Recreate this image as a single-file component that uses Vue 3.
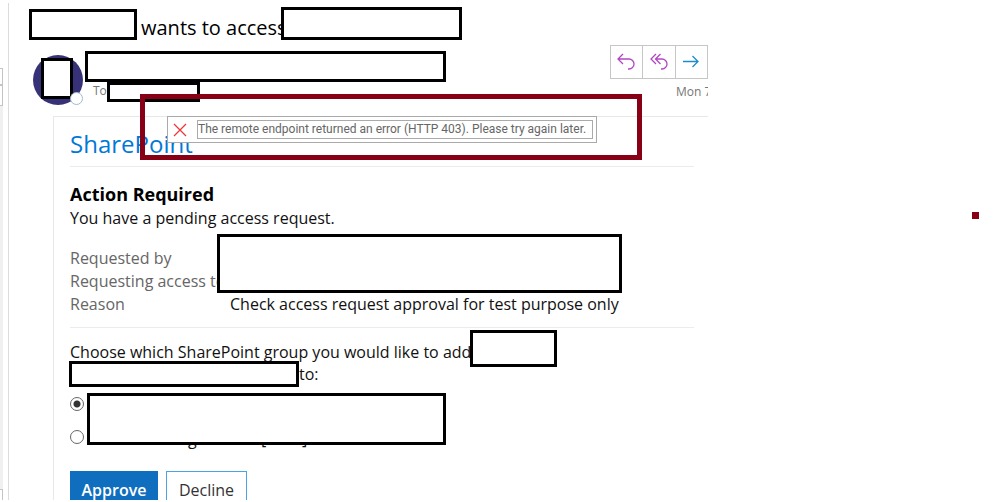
<script setup>
import { ref } from 'vue'

const group = ref('first')
</script>

<template>
  <div class="window">
    <div class="rail" aria-hidden="true">
      <div class="rail-top"></div>
      <div class="rail-button"></div>
      <div class="rail-track"></div>
      <div class="rail-end"></div>
    </div>

    <main class="pane">
      <h1 class="subject">
        <span class="redacted subject-from"></span>
        <span class="subject-text">wants to access</span>
        <span class="redacted subject-site"></span>
      </h1>

      <header class="sender">
        <div class="avatar">
          <span class="redacted avatar-cover"></span>
          <span class="presence"></span>
        </div>
        <div class="sender-lines">
          <div class="redacted sender-name"></div>
          <div class="to-line">
            <span>To</span>
            <span class="redacted to-name"></span>
          </div>
        </div>
        <div class="sender-side">
          <div class="actions">
            <button type="button" aria-label="Reply">
              <svg width="18" height="18" viewBox="0 0 18 18" class="reply">
                <path d="M5 1 0 6 5 11M0 6H11A4.500 4.500 0 0 1 11 16H10" />
              </svg>
            </button>
            <button type="button" aria-label="Reply all">
              <svg width="18" height="18" viewBox="0 0 18 18" class="reply">
                <path d="M6 1 1 6 6 11M10.500 1 5.500 6 10.500 11M5.500 6H12A4.500 4.500 0 0 1 12 16H11" />
              </svg>
            </button>
            <button type="button" aria-label="Forward">
              <svg width="18" height="18" viewBox="0 0 18 18" class="forward">
                <path d="M1 8.500H16M10.500 3 16 8.500 10.500 14" />
              </svg>
            </button>
          </div>
          <div class="date">Mon 7</div>
        </div>
      </header>

      <section class="card">
        <div class="brand">SharePoint</div>
        <div class="block">
          <h2>Action Required</h2>
          <p class="lead">You have a pending access request.</p>
          <dl class="facts">
            <dt>Requested by</dt><dd></dd>
            <dt>Requesting access to</dt><dd></dd>
            <dt>Reason</dt><dd>Check access request approval for test purpose only</dd>
          </dl>
          <span class="redacted facts-cover"></span>
        </div>
        <form class="block choose" @submit.prevent>
          <p class="question">
            Choose which SharePoint group you would like to add
            <span class="redacted person-cover"></span>
          </p>
          <p class="question second">to:</p>
          <span class="redacted line-cover"></span>
          <div class="options">
            <label><input v-model="group" type="radio" name="group" value="first" /></label>
            <label>
              <input v-model="group" type="radio" name="group" value="second" />
              <span class="option-text"><span>g</span><span>[</span><span>]</span></span>
            </label>
            <span class="redacted options-cover"></span>
          </div>
          <div class="buttons">
            <button type="button" class="approve">Approve</button>
            <button type="button" class="decline">Decline</button>
          </div>
        </form>
      </section>

      <div class="highlight">
        <div class="toast" role="alert">
          <svg width="14" height="14" viewBox="0 0 14 14" class="cross">
            <path d="M1 1 13 13M13 1 1 13" />
          </svg>
          <span class="toast-text">The remote endpoint returned an error (HTTP 403). Please try again later.</span>
        </div>
      </div>
    </main>

    <aside class="margin"><span class="mark"></span></aside>
  </div>
</template>

<style>
body {
  background: #fff;
}
</style>

<style scoped>
* {
  box-sizing: border-box;
}
.window {
  display: grid;
  grid-template-columns: 9px 699fr 291fr;
  height: calc(100vh - 2px);
  overflow: hidden;
  background: #fff;
  color: #111;
  font-family: "Open Sans", "Noto Sans", sans-serif;
  font-size: 16px;
}
h1, h2, p, dl, dd {
  margin: 0;
}
button {
  font: inherit;
  padding: 0;
}
.redacted {
  display: block;
  border: 3px solid #000;
  background: #fff;
}
.rail {
  display: flex;
  flex-direction: column;
  margin-top: 3px;
  padding-right: 5px;
  border-right: 1px solid #dcdcdc;
}
.rail-top {
  height: 65px;
}
.rail-button {
  height: 17px;
  border: 1px solid #c4c4c4;
  border-left: 0;
}
.rail-track {
  flex: 1;
  background: #f0f0f0;
}
.rail-track::before {
  content: "";
  display: block;
  height: 19px;
  border: 1px solid #c4c4c4;
  border-left: 0;
  background: #fff;
}
.rail-end {
  height: 11px;
  border: 1px solid #c4c4c4;
  border-width: 1px 1px 0 0;
}
.pane {
  position: relative;
  min-width: 0;
  overflow: hidden;
}
.subject {
  display: flex;
  align-items: flex-end;
  height: 40px;
  padding-left: 20px;
  color: #000;
  font-size: 20px;
  font-weight: 400;
  line-height: 25px;
  white-space: nowrap;
}
.subject-from {
  width: 108px;
  height: 31px;
}
.subject-text {
  width: 144px;
  padding-left: 4px;
}
.subject-site {
  width: 181px;
  height: 33px;
}
.sender {
  display: flex;
  align-items: flex-start;
  height: 76px;
  padding: 5px 0 0 24px;
}
.avatar {
  position: relative;
  width: 50px;
  height: 50px;
  margin-top: 10px;
  border-radius: 50%;
  background: #373277;
}
.avatar-cover {
  position: absolute;
  left: 8px;
  top: 3px;
  width: 32px;
  height: 41px;
}
.presence {
  position: absolute;
  right: 0;
  bottom: 0;
  width: 13px;
  height: 13px;
  border: 1px solid #9dbccb;
  border-radius: 50%;
  background: #fff;
}
.sender-lines {
  flex: 1;
  margin-top: 6px;
  padding-left: 2px;
}
.sender-name {
  width: 361px;
  height: 31px;
}
.to-line {
  display: flex;
  padding-left: 8px;
  color: #767676;
  font-size: 12px;
  line-height: 18px;
}
.to-line > span:first-child {
  width: 14px;
}
.to-name {
  width: 93px;
  height: 20px;
}
.sender-side {
  width: 98px;
}
.actions {
  display: flex;
  height: 34px;
  border: 1px solid #c6c6c6;
}
.actions button {
  flex: 1;
  display: grid;
  place-items: center;
  border: 0;
  background: #fff;
}
.actions button + button {
  border-left: 1px solid #c6c6c6;
}
svg {
  display: block;
  overflow: visible;
  fill: none;
  stroke-width: 1.3;
}
.reply {
  stroke: #b146c2;
}
.forward {
  stroke: #1e8bcd;
}
.date {
  padding: 4px 0 0 66px;
  overflow: hidden;
  color: #767676;
  font-size: 12px;
  line-height: 18px;
  white-space: nowrap;
}
.card {
  margin-left: 44px;
  padding: 0 14px 0 16px;
  border: 1px solid #e8e8e8;
  border-width: 1px 0 0 1px;
}
.brand {
  padding-top: 10px;
  height: 49px;
  color: #0078d7;
  font-size: 24px;
  line-height: 34px;
}
.block {
  position: relative;
  border-top: 1px solid #ececec;
  padding-top: 14px;
}
h2 {
  color: #000;
  font-size: 18px;
  line-height: 26px;
}
.lead {
  line-height: 23px;
}
.facts {
  display: grid;
  grid-template-columns: 160px 1fr;
  padding: 17px 0 11px;
  line-height: 23px;
}
.facts dt {
  color: #666;
  white-space: nowrap;
}
.facts-cover {
  position: absolute;
  left: 147px;
  top: 67px;
  width: 405px;
  height: 59px;
}
.choose {
  padding-top: 13px;
}
.question {
  position: relative;
  line-height: 22px;
  white-space: nowrap;
}
.question.second {
  padding-left: 229px;
}
.person-cover {
  position: absolute;
  left: 400px;
  top: -11px;
  width: 87px;
  height: 37px;
}
.line-cover {
  position: absolute;
  left: -1px;
  top: 33px;
  width: 230px;
  height: 26px;
}
.options {
  position: relative;
  display: grid;
  gap: 11px;
  padding-top: 8px;
}
.options label {
  display: flex;
  align-items: center;
  height: 22px;
}
.options input {
  appearance: none;
  width: 14px;
  height: 14px;
  margin: 0;
  border: 1px solid #666;
  border-radius: 50%;
  background: #fff;
}
.options input:checked {
  background: radial-gradient(circle, #333 3px, #fff 4px);
}
.option-text {
  display: grid;
  grid-template-columns: 73px 41px 20px;
  padding: 4px 0 0 104px;
}
.options-cover {
  position: absolute;
  left: 17px;
  top: 8px;
  width: 359px;
  height: 52px;
}
.buttons {
  display: flex;
  gap: 8px;
  padding-top: 23px;
}
.buttons button {
  height: 38px;
}
.approve {
  width: 88px;
  border: 1px solid #106ebe;
  background: #106ebe;
  color: #fff;
  font-weight: 600;
}
.decline {
  width: 81px;
  border: 1px solid #4ba3e3;
  background: #fff;
  color: #333;
}
.highlight {
  position: absolute;
  left: 131px;
  top: 94px;
  width: 502px;
  height: 66px;
  padding: 17px 0 0 22px;
  border: 5px solid #880015;
}
.toast {
  display: flex;
  align-items: center;
  width: 430px;
  height: 27px;
  padding-left: 5px;
  border: 1px solid #aaa;
  background: #fff;
}
.cross {
  stroke: #e83a3a;
}
.toast-text {
  width: 396px;
  height: 19px;
  margin-left: 10px;
  border: 1px solid #aaa;
  color: #666;
  font-family: Roboto, "Open Sans", sans-serif;
  font-size: 12px;
  line-height: 17px;
  white-space: nowrap;
}
.margin {
  padding: 212px 0 0 264px;
}
.mark {
  display: block;
  width: 7px;
  height: 7px;
  background: #880015;
}
</style>
